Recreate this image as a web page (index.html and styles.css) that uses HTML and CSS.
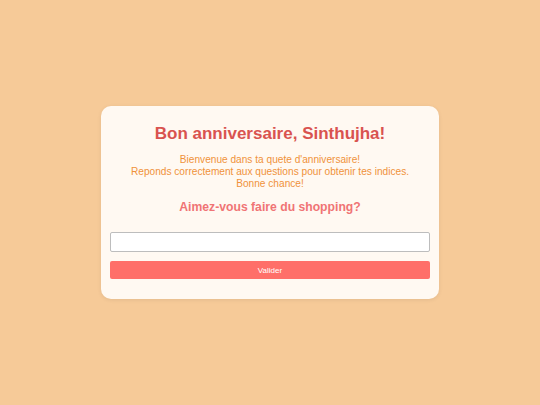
FILE: index.html
```html
<!DOCTYPE html>
<html lang="fr">
<head>
<meta charset="utf-8">
<title>Bon anniversaire</title>
<link rel="stylesheet" href="styles.css">
</head>
<body>
<main class="card">
  <h1 class="title">Bon anniversaire, Sinthujha!</h1>
  <p class="intro">Bienvenue dans ta quete d'anniversaire!<br>Reponds correctement aux questions pour obtenir tes indices.<br>Bonne chance!</p>
  <h2 class="question">Aimez-vous faire du shopping?</h2>
  <form class="answer-form">
    <input class="answer" type="text">
    <button class="submit" type="button">Valider</button>
  </form>
</main>
</body>
</html>
```

FILE: styles.css
```css
html, body {
  margin: 0;
  height: 100%;
}
body {
  background: #f6ca98;
  font-family: "Liberation Sans", Arial, sans-serif;
  display: flex;
  align-items: center;
  justify-content: center;
}
.card {
  width: 338px;
  box-sizing: border-box;
  background: #fff9f2;
  border-radius: 10px;
  padding: 17px 9px 20px;
  text-align: center;
  box-shadow: 0 1px 4px rgba(0,0,0,0.08);
}
.title {
  margin: 0;
  font-size: 17px;
  line-height: 22px;
  color: #d9534f;
  font-weight: bold;
}
.intro {
  margin: 9px 0 0;
  font-size: 10.15px;
  line-height: 12px;
  color: #f0923a;
}
.question {
  margin: 10px 0 0;
  font-size: 12.2px;
  line-height: 15px;
  color: #f07475;
  font-weight: bold;
}
.answer-form {
  margin-top: 17px;
  display: flex;
  flex-direction: column;
  gap: 9px;
}
.answer {
  display: block;
  box-sizing: border-box;
  width: 100%;
  height: 20px;
  margin: 0;
  border: 1px solid #bdbdbd;
  border-radius: 2px;
  background: #fff;
}
.submit {
  display: block;
  width: 100%;
  height: 18px;
  margin: 0;
  border: none;
  border-radius: 2px;
  background: #ff6f69;
  color: #fff;
  font-family: "Liberation Sans", Arial, sans-serif;
  font-size: 8px;
  padding: 0;
}
```
